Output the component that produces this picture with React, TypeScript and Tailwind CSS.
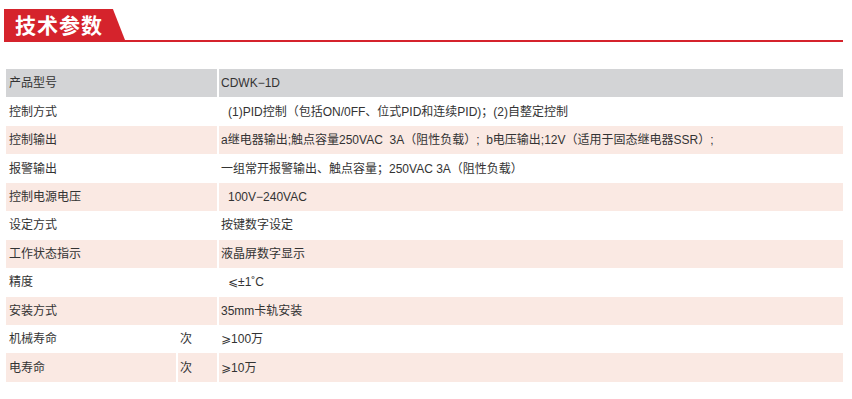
import React from "react";

type Row = { label: string; unit?: string; value: string; bg: string; indent?: boolean; split?: boolean };

const GRAY = "bg-[#d3d4d6]";
const PINK = "bg-[#fae9e3]";
const WHITE = "bg-white";

const rows: Row[] = [
  { label: "产品型号", value: "CDWK−1D", bg: GRAY },
  { label: "控制方式", value: "(1)PID控制（包括ON/0FF、位式PID和连续PID)；(2)自整定控制", bg: WHITE, indent: true },
  { label: "控制输出", value: "a继电器输出;触点容量250VAC  3A（阻性负载）;  b电压输出;12V（适用于固态继电器SSR）;", bg: PINK },
  { label: "报警输出", value: "一组常开报警输出、触点容量；250VAC 3A（阻性负载）", bg: WHITE },
  { label: "控制电源电压", value: "100V−240VAC", bg: PINK, indent: true },
  { label: "设定方式", value: "按键数字设定", bg: WHITE },
  { label: "工作状态指示", value: "液晶屏数字显示", bg: PINK },
  { label: "精度", value: "⩽±1˚C", bg: WHITE, indent: true },
  { label: "安装方式", value: "35mm卡轨安装", bg: PINK },
  { label: "机械寿命", unit: "次", value: "⩾100万", bg: WHITE, split: true },
  { label: "电寿命", unit: "次", value: "⩾10万", bg: PINK, split: true },
];

export default function App() {
  return (
    <div
      className="w-[852px] h-[399px] bg-white overflow-hidden"
      style={{ fontFamily: '"Liberation Sans", "Noto Sans CJK SC", "DejaVu Sans", sans-serif' }}
    >
      <div className="ml-[4px] mt-[9px] w-[839px] border-b-2 border-[#d5232c]">
        <div className="h-[31px] w-[121px] bg-[#d5232c] [clip-path:polygon(0_0,90%_0,100%_100%,0_100%)] flex items-center pl-[11px]">
          <span className="text-white text-[21px] font-bold leading-none tracking-[1px]" style={{ fontFamily: '"Noto Sans CJK SC", sans-serif' }}>
            技术参数
          </span>
        </div>
      </div>
      <div className="ml-[6px] mt-[27px] w-[837px] flex flex-col text-[12px] text-[#333] leading-none">
        {rows.map((r, i) => (
          <div key={i} className="h-[28.45px] flex gap-[2px]">
            {r.split ? (
              <>
                <div className={`w-[170px] ${r.bg} flex items-center pl-[3px]`}>{r.label}</div>
                <div className={`w-[39px] ${r.bg} flex items-center pl-[2px]`}>{r.unit}</div>
              </>
            ) : (
              <div className={`w-[211px] ${r.bg} flex items-center pl-[3px]`}>{r.label}</div>
            )}
            <div className={`flex-1 ${r.bg} flex items-center whitespace-pre ${r.indent ? "pl-[9px]" : "pl-[2px]"}`}>
              {r.value}
            </div>
          </div>
        ))}
      </div>
    </div>
  );
}
